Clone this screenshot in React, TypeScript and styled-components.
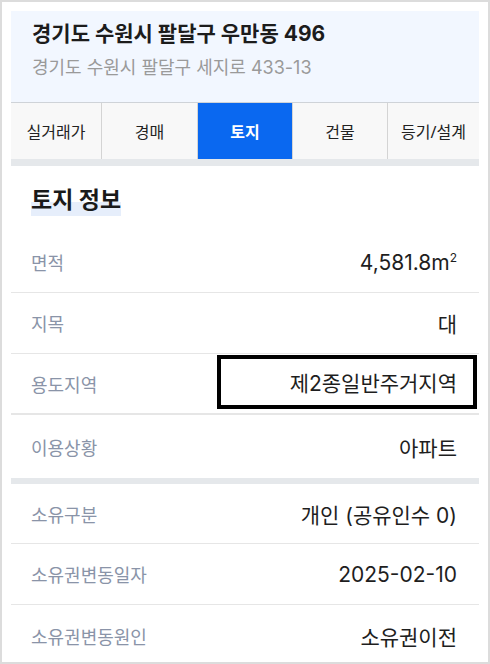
import styled, { createGlobalStyle } from "styled-components";

const GlobalStyle = createGlobalStyle`
  * { box-sizing: border-box; }
  body {
    margin: 0;
    font-family: Inter, "Noto Sans CJK KR", sans-serif;
    background: #fff;
  }
`;

const Frame = styled.div`
  width: 490px;
  height: 664px;
  border: 2px solid #dcdcdc;
  padding: 9px 9px 0 9px;
  overflow: hidden;
`;

const Header = styled.header`
  background: #f2f7ff;
  height: 91px;
  padding: 9px 21px 0;
  display: flex;
  flex-direction: column;
  gap: 8px;
`;

const Address = styled.h1`
  margin: 0;
  font-size: 21px;
  font-weight: 700;
  color: #1c1c1c;
  line-height: 28px;
`;

const SubAddress = styled.p`
  margin: 0;
  font-size: 18px;
  color: #9a9a9a;
  line-height: 24px;
`;

const Tabs = styled.nav`
  display: grid;
  grid-template-columns: 90px 96px 95px 95px 92px;
  height: 56px;
  border-top: 1px solid #cfd3d8;
  border-bottom: 7px solid #e5e8eb;
  box-sizing: content-box;
`;

const Tab = styled.div<{ $active?: boolean }>`
  display: flex;
  align-items: center;
  justify-content: center;
  font-family: "Noto Sans", "Noto Sans CJK KR", sans-serif;
  font-size: 16px;
  font-weight: ${(p) => (p.$active ? 700 : 400)};
  color: ${(p) => (p.$active ? "#fff" : "#222")};
  background: ${(p) => (p.$active ? "#0a68f0" : "#f8f8f8")};
  border-left: 1px solid #d4d4d4;
  &:first-child { border-left: none; }
`;

const SectionTitle = styled.div`
  height: 66px;
  padding: 19px 20px 0;
`;

const TitleText = styled.h2`
  display: inline-block;
  margin: 0;
  font-size: 23px;
  font-weight: 700;
  color: #1a1a1a;
  line-height: 30px;
  background: linear-gradient(transparent 55%, #e6eefb 55%);
  padding-bottom: 1px;
`;

const Row = styled.div<{ $thick?: boolean }>`
  height: 61px;
  display: flex;
  align-items: center;
  justify-content: space-between;
  padding: 0 22px 0 20px;
  border-bottom: ${(p) => (p.$thick ? "2px" : "1px")} solid #e6e6e6;
`;

const Divider = styled.div`
  height: 6px;
  background: #e5e8eb;
`;

const Label = styled.span`
  font-size: 18px;
  color: #8a94a8;
`;

const Value = styled.span`
  font-size: 21px;
  color: #1e1e1e;
`;

const Sup = styled.sup`
  font-size: 12px;
  vertical-align: 8px;
`;

const MarkedValue = styled(Value)`
  width: 260px;
  height: 54px;
  margin-right: -20px;
  align-self: flex-start;
  margin-top: 1px;
  border: 4px solid #000;
  display: flex;
  align-items: center;
  justify-content: flex-end;
  padding-right: 16px;
`;

const tabs = ["실거래가", "경매", "토지", "건물", "등기/설계"];

export default function App() {
  return (
    <>
      <GlobalStyle />
      <Frame>
        <Header>
          <Address>경기도 수원시 팔달구 우만동 496</Address>
          <SubAddress>경기도 수원시 팔달구 세지로 433-13</SubAddress>
        </Header>
        <Tabs>
          {tabs.map((t) => (
            <Tab key={t} $active={t === "토지"}>
              {t}
            </Tab>
          ))}
        </Tabs>
        <SectionTitle>
          <TitleText>토지 정보</TitleText>
        </SectionTitle>
        <Row>
          <Label>면적</Label>
          <Value>
            4,581.8m<Sup>2</Sup>
          </Value>
        </Row>
        <Row>
          <Label>지목</Label>
          <Value>대</Value>
        </Row>
        <Row $thick>
          <Label>용도지역</Label>
          <MarkedValue>제2종일반주거지역</MarkedValue>
        </Row>
        <Row style={{ height: 63, borderBottom: "none" }}>
          <Label>이용상황</Label>
          <Value>아파트</Value>
        </Row>
        <Divider />
        <Row style={{ height: 60 }}>
          <Label>소유구분</Label>
          <Value>개인 (공유인수 0)</Value>
        </Row>
        <Row>
          <Label>소유권변동일자</Label>
          <Value>2025-02-10</Value>
        </Row>
        <Row style={{ borderBottom: "none" }}>
          <Label>소유권변동원인</Label>
          <Value>소유권이전</Value>
        </Row>
      </Frame>
    </>
  );
}
